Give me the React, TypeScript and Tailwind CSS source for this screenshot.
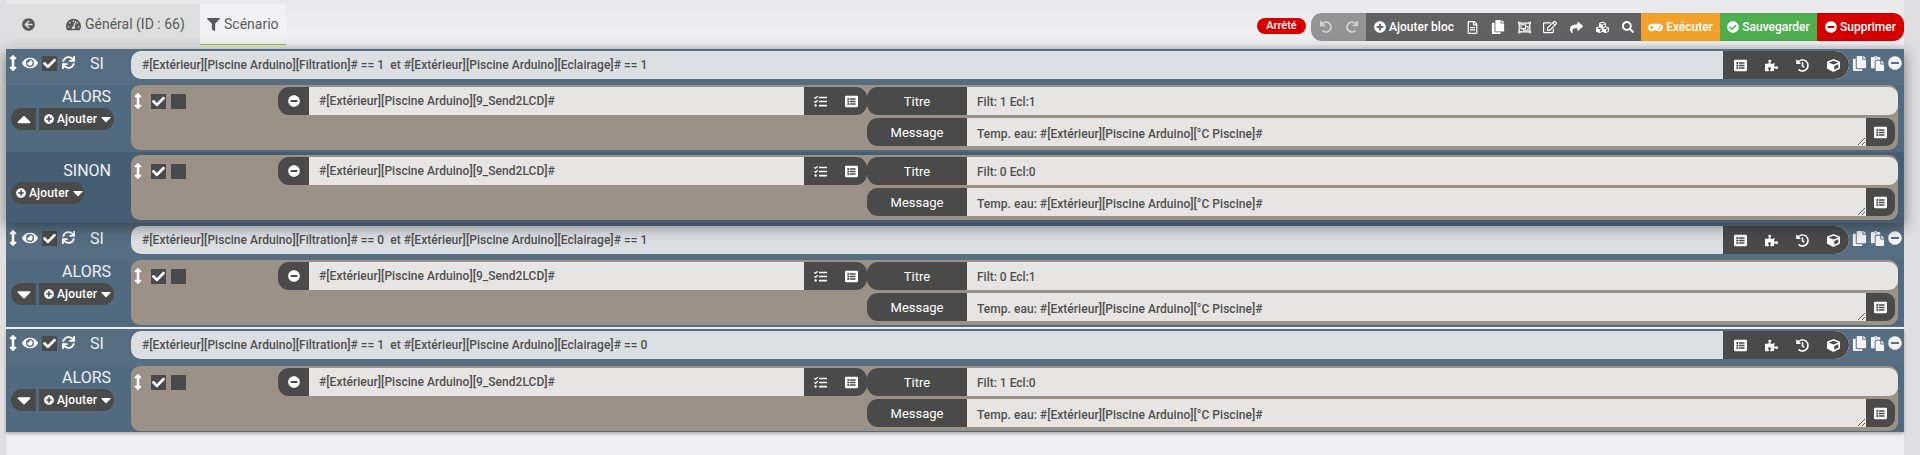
import React from "react";
import {
  FaArrowCircleLeft, FaTachometerAlt, FaFilter, FaArrowsAltV, FaEye, FaCheck, FaSync, FaPlusCircle, FaMinusCircle,
  FaCaretDown, FaCaretUp, FaListAlt, FaPuzzlePiece, FaHistory, FaCube, FaCopy, FaPaste, FaTasks, FaUndo, FaRedo,
  FaRegFileAlt, FaRegObjectGroup, FaRegEdit, FaShare, FaCubes, FaSearch, FaGamepad, FaCheckCircle,
} from "react-icons/fa";

const Box = ({ checked }: { checked?: boolean }) => (
  <span className="w-[15px] h-[15px] bg-[#4a4a4a] flex items-center justify-center text-white">
    {checked && <FaCheck size={13} />}
  </span>
);

const Si = ({ text, mt }: { text: string; mt: string }) => (
  <div className={`flex items-start h-[28px] ${mt}`}>
    <div className="w-[125px] h-[28px] shrink-0 flex items-center text-white">
      <div className="flex items-center -mt-[4px]">
        <FaArrowsAltV size={16} className="ml-[-1px] shrink-0" />
        <FaEye size={16} className="ml-[1px] shrink-0" />
        <span className="ml-[4px]"><Box checked /></span>
        <FaSync size={13} className="ml-[5px] shrink-0 -mt-[2px]" />
        <span className="ml-[15px] text-[16px] text-[#eef1f3] mt-[2px]">SI</span>
      </div>
    </div>
    <div className="flex-1 h-[28px] flex bg-[#dbdfe2] rounded-l-[10px] rounded-r-[14px] overflow-hidden">
      <div className="flex-1 pl-[11px] text-[12px] font-medium tracking-[0.04px] text-[#505050] leading-[29px] whitespace-pre">{text}</div>
      <div className="w-[126px] bg-[#4a4a4a] rounded-r-[14px] text-white flex items-center pl-[11px] gap-[18px]">
        <FaListAlt size={13} />
        <FaPuzzlePiece size={13} />
        <FaHistory size={13} />
        <FaCube size={13} />
      </div>
    </div>
    <div className="w-[55px] h-[28px] shrink-0 flex items-center text-[#f2f4f5] gap-[3px] pl-[3px]">
      <FaCopy size={15} className="-mt-[4px] shrink-0" />
      <FaPaste size={15} className="-mt-[4px] shrink-0" />
      <FaMinusCircle size={14} className="-mt-[4px] shrink-0" />
    </div>
  </div>
);

const ListBtn = () => (
  <span className="text-white"><FaListAlt size={13} /></span>
);

const Action = ({ title }: { title: string }) => (
  <div className="flex-1 h-[65px] mr-[6px] bg-[#9b9187] rounded-[9px] pt-[2px] flex">
    <div className="w-[147px] shrink-0 flex items-start text-white">
      <FaArrowsAltV size={16} className="ml-[-1px] mt-[6px]" />
      <span className="ml-[5px] mt-[7px]"><Box checked /></span>
      <span className="ml-[5px] mt-[7px]"><Box /></span>
    </div>
    <div className="w-[589px] shrink-0 h-[28px] flex">
      <div className="w-[31px] bg-[#4a4a4a] rounded-l-[11px] text-white flex items-center justify-center">
        <FaMinusCircle size={12} />
      </div>
      <div className="flex-1 bg-[#e6e5e3] pl-[10px] text-[12px] font-medium tracking-[0.04px] text-[#505050] leading-[29px]">#[Extérieur][Piscine Arduino][9_Send2LCD]#</div>
      <div className="w-[63px] bg-[#4a4a4a] rounded-r-[11px] flex items-center pl-[10px] gap-[18px] text-white">
        <FaTasks size={13} />
        <ListBtn />
      </div>
    </div>
    <div className="flex-1 flex flex-col gap-[3px]">
      <div className="flex h-[28px]">
        <div className="w-[100px] bg-[#4a4a4a] rounded-l-[11px] pt-[1px] text-white text-[13px] flex items-center justify-center">Titre</div>
        <input readOnly value={title} className="flex-1 min-w-0 bg-[#e6e5e3] rounded-r-[9px] pl-[10px] pt-[2px] text-[12px] font-medium text-[#505050] outline-none" />
      </div>
      <div className="flex h-[28px] mr-[3px]">
        <div className="w-[100px] bg-[#4a4a4a] rounded-l-[11px] pt-[1px] text-white text-[13px] flex items-center justify-center">Message</div>
        <textarea readOnly value="Temp. eau: #[Extérieur][Piscine Arduino][°C Piscine]#" className="flex-1 min-w-0 h-[28px] bg-[#e6e5e3] pl-[10px] pt-[2px] text-[12px] font-medium tracking-[0.04px] text-[#505050] leading-[28px] overflow-hidden outline-none" />
        <div className="w-[29px] bg-[#4a4a4a] rounded-r-[9px] flex items-center justify-center">
          <ListBtn />
        </div>
      </div>
    </div>
  </div>
);

const Ajouter = ({ solo }: { solo?: boolean }) => (
  <div className={`h-[22px] bg-[#4a4a4a] flex items-center justify-start pl-[5px] text-white text-[12px] font-medium tracking-[0.15px] ${solo ? "rounded-[11px] w-[73px]" : "w-[75px] rounded-r-[11px] ml-[3px]"}`}>
    <FaPlusCircle size={10} className="shrink-0 mr-[3px]" />
    <span>Ajouter</span>
    <FaCaretDown size={16} className="shrink-0 ml-[1px]" />
  </div>
);

const Then = ({ label, caret, title, bg, h, top }: { label: string; caret?: "up" | "down"; title: string; bg: string; h: string; top: string }) => (
  <div className={`flex ${bg} ${h}`}>
    <div className="w-[125px] shrink-0 pl-[5px]">
      <div className={`text-[16px] text-[#eef1f3] text-right pr-[20px] leading-[19px] ${top}`}>{label}</div>
      <div className="flex mt-[2px]">
        {caret && (
          <div className="w-[25px] h-[22px] bg-[#4a4a4a] rounded-l-[11px] text-white flex items-center justify-center">
            {caret === "up" ? <FaCaretUp size={22} /> : <FaCaretDown size={22} />}
          </div>
        )}
        <Ajouter solo={!caret} />
      </div>
    </div>
    <Action title={title} />
  </div>
);

const Tool = ({ children }: { children: React.ReactNode }) => (
  <span className="w-[26px] flex items-center justify-center">{children}</span>
);

export default function App() {
  return (
    <div className="w-[1920px] h-[455px] overflow-hidden bg-[#dfdfe1] pl-[6px] pr-[16px] font-['Roboto',sans-serif]">
      <div className="h-[455px] bg-[#efeff1] flex flex-col">
        <div className="h-[49px] flex items-start bg-gradient-to-b from-[#e9e9eb] to-[#f1f1f3] border-b-[4px] border-[#e6e6e8]">
          <div className="mt-[4px] h-[41px] w-[194px] bg-[#dedede] flex items-center text-[#5a5a5a] text-[14px] shrink-0">
            <FaArrowCircleLeft size={13} className="ml-[16px]" />
            <FaTachometerAlt size={15} className="ml-[31px]" />
            <span className="ml-[4px]">Général (ID : 66)</span>
          </div>
          <div className="mt-[4px] h-[41px] w-[86px] bg-[#f1f1f3] border-b-[1px] border-[#93c927] flex items-center text-[#5a5a5a] text-[14px] shrink-0">
            <FaFilter size={13} className="ml-[7px]" />
            <span className="ml-[4px]">Scénario</span>
          </div>
          <div className="flex-1" />
          <div className="mt-[18px] h-[16px] w-[49px] rounded-[8px] bg-[#d40000] text-white text-[11px] font-medium flex items-center justify-center">Arrêté</div>
          <div className="ml-[5px] mt-[13px] h-[28px] flex rounded-[11px] overflow-hidden text-white text-[12px] font-medium">
            <div className="w-[55px] bg-[#949494] flex items-center justify-center gap-[14px] text-[#d2d2d2]">
              <FaUndo size={12} />
              <FaRedo size={12} />
            </div>
            <div className="w-[275px] bg-[#626262] flex items-center pl-[8px]">
              <span className="w-[85px] flex items-center gap-[3px]"><FaPlusCircle size={12} />Ajouter bloc</span>
              <Tool><FaRegFileAlt size={13} /></Tool>
              <Tool><FaCopy size={14} /></Tool>
              <Tool><FaRegObjectGroup size={13} /></Tool>
              <Tool><FaRegEdit size={14} /></Tool>
              <Tool><FaShare size={13} /></Tool>
              <Tool><FaCubes size={13} /></Tool>
              <Tool><FaSearch size={12} /></Tool>
            </div>
            <div className="w-[79px] bg-[#f2a22b] flex items-center justify-center gap-[3px]"><FaGamepad size={15} />Exécuter</div>
            <div className="w-[97px] bg-[#4fae50] flex items-center justify-center gap-[3px]"><FaCheckCircle size={12} />Sauvegarder</div>
            <div className="w-[87px] bg-[#d40000] flex items-center justify-center gap-[3px]"><FaMinusCircle size={12} />Supprimer</div>
          </div>
        </div>

        <div className="flex flex-col">
          <div className="relative z-10 bg-[#566d82] h-[173px] shadow-[0_4px_14px_rgba(30,30,30,0.55)]">
            <Si mt="mt-[2px]" text="#[Extérieur][Piscine Arduino][Filtration]# == 1  et #[Extérieur][Piscine Arduino][Eclairage]# == 1" />
            <div className="h-[6px]" />
            <Then label="ALORS" caret="up" top="pt-[2px]" title="Filt: 1 Ecl:1" bg="bg-[#516a80]" h="h-[67px]" />
            <Then label="SINON" top="pt-[6px]" title="Filt: 0 Ecl:0" bg="bg-[#465d73] pt-[3px]" h="h-[71px]" />
          </div>
          <div className="mt-[1px] bg-[#566d82] h-[104px]">
            <Si mt="mt-[3px]" text="#[Extérieur][Piscine Arduino][Filtration]# == 0  et #[Extérieur][Piscine Arduino][Eclairage]# == 1" />
            <div className="h-[6px]" />
            <Then label="ALORS" caret="down" top="pt-[2px]" title="Filt: 0 Ecl:1" bg="bg-[#516a80]" h="h-[66px]" />
          </div>
          <div className="mt-[2px] bg-[#566d82] h-[103px] shadow-[0_2px_3px_rgba(60,60,60,0.35)]">
            <Si mt="mt-[2px]" text="#[Extérieur][Piscine Arduino][Filtration]# == 1  et #[Extérieur][Piscine Arduino][Eclairage]# == 0" />
            <div className="h-[7px]" />
            <Then label="ALORS" caret="down" top="pt-[2px]" title="Filt: 1 Ecl:0" bg="bg-[#516a80]" h="h-[66px]" />
          </div>
        </div>
      </div>
    </div>
  );
}
